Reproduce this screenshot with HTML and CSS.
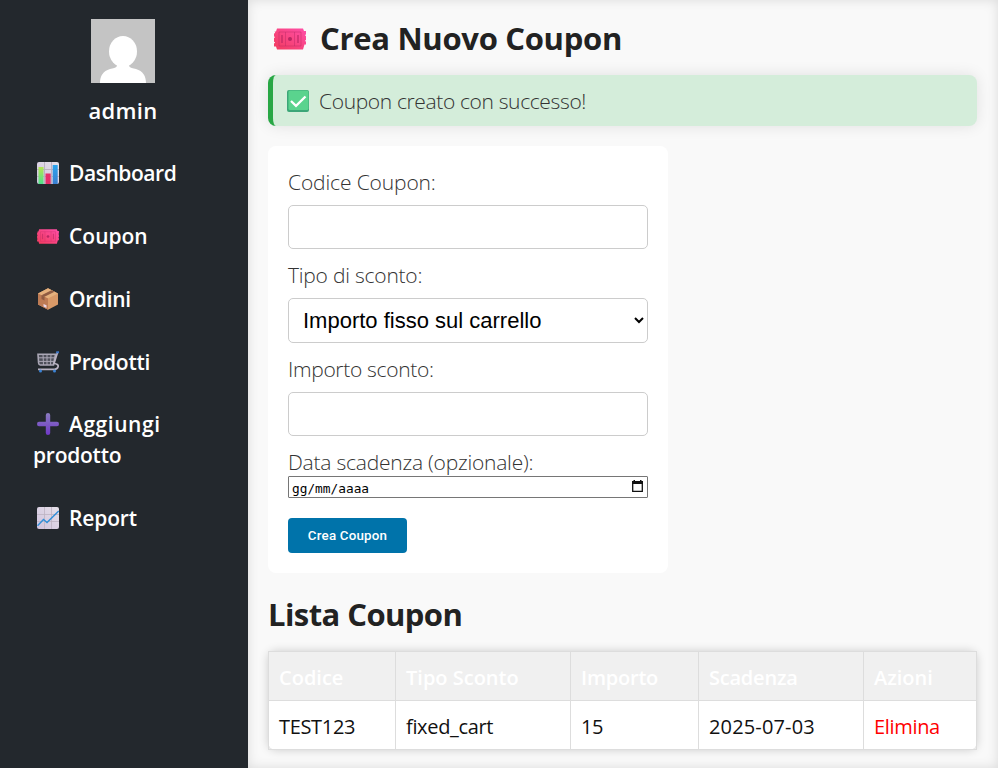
FILE: index.html
```html
<!DOCTYPE html>
<html lang="it">
<head>
<meta charset="utf-8">
<title>Crea Nuovo Coupon</title>
<link rel="stylesheet" href="styles.css">
</head>
<body>
<svg class="defs" width="0" height="0" aria-hidden="true">
  <defs>
    <linearGradient id="pink" x1="0" x2="1" y1="1" y2="0"><stop offset="0" stop-color="#f23b5e"/><stop offset="1" stop-color="#ff4fa8"/></linearGradient>
    <linearGradient id="green" x1="0" x2="0" y1="0" y2="1"><stop offset="0" stop-color="#b5e552"/><stop offset="1" stop-color="#4fe08c"/></linearGradient>
    <linearGradient id="blue" x1="0" x2="0" y1="0" y2="1"><stop offset="0" stop-color="#2ba4ee"/><stop offset="1" stop-color="#3b7fd0"/></linearGradient>
    <linearGradient id="paper" x1="1" x2="0" y1="0" y2="1"><stop offset="0" stop-color="#e6e0e8"/><stop offset="1" stop-color="#cfc3de"/></linearGradient>
    <linearGradient id="violet" x1="0" x2="0" y1="0" y2="1"><stop offset="0" stop-color="#8a7cc0"/><stop offset="1" stop-color="#7038c8"/></linearGradient>
    <symbol id="ticket" viewBox="0 0 32 22">
      <path fill="url(#pink)" d="M3 0.5H29L30 3H32V6.500Q30 7.200 32 8V12Q30 12.800 32 13.500V16.500H30.500L29 21.500H3L2 18.500H0V15.500Q2 14.500 0 13.800V10Q2 9.200 0 8.500V5.500Q2 5 0.500 3.500H2Z"/>
      <g fill="none" stroke="#b82763" stroke-opacity=".6"><path d="M5 4H27V18H5ZM11.500 4V18M20.500 4V18" stroke-width=".7"/><path d="M8 7V15M24 7V15" stroke-width="1.800"/></g>
      <circle cx="16" cy="11" r="2" fill="#b82763"/>
    </symbol>
  </defs>
</svg>
<div class="layout">
  <aside class="sidebar">
    <div class="profile">
      <svg class="avatar" viewBox="0 0 64 64"><rect width="64" height="64" fill="#c4c4c4"/><ellipse cx="32" cy="32.500" rx="14" ry="15.500" fill="#fff"/><path fill="#fff" d="M26 43V47C25 49 22 49 19 50C12 52 9 57 9 64H55C55 57 52 52 45 50C42 49 39 49 38 47V43Z"/></svg>
      <div class="username">admin</div>
    </div>
    <nav class="menu">
      <a class="item dashboard"><svg class="icon" viewBox="0 0 22 22"><rect width="22" height="22" rx="2" fill="url(#paper)"/><path d="M7.500 0V22M14.500 0V22M0 7.500H22M0 14.500H22" stroke="#b8adbd" stroke-width=".9"/><rect x="1.500" y="5" width="5" height="17" fill="url(#green)"/><rect x="8.500" y="11.500" width="5.200" height="10.500" fill="#e62e6b"/><rect x="15.700" y="3" width="5" height="19" fill="url(#blue)"/></svg><span>Dashboard</span></a>
      <a class="item coupon"><svg class="icon ticket"><use href="#ticket"/></svg><span>Coupon</span></a>
      <a class="item orders"><svg class="icon" viewBox="0 0 22 22"><path d="M11 .3 21 5.500V16.500L11 21.700 1 16.500V5.500Z" fill="#d99a68"/><path d="M11 .3 21 5.500 11 10.500 1 5.500Z" fill="#e5b17d"/><path d="M1 5.500 11 10.500V21.700L1 16.500Z" fill="#bd7b54"/><path d="M4.500 3.800 7.500 2.200 17.500 7.200 14.500 8.700Z" fill="#8f5c43" transform="matrix(-1 0 0 1 22 0)"/><path d="M4.500 7.200V11L7.500 12.500V8.700Z" fill="#8f5c43"/><path d="M6.500 16 9.500 17.300V20L6.500 18.500Z" fill="#ead6e5"/></svg><span>Ordini</span></a>
      <a class="item products"><svg class="icon" viewBox="0 0 22 22"><g fill="none" stroke="#aaa7b5" stroke-width="1.600"><path d="M1 3.300H18.500L16.500 14H3.300Q1.800 14 1.600 12Z" fill="#4d4f59"/><path d="M1.500 6.800H17.500M1.800 10.400H17M6 3.300 6.500 14M10 3.300V14M14 3.300 13.500 14" stroke-width="1"/><path d="M20.500 1.500 17 12.500Q21.500 13 21.200 15.500Q20.500 18.300 17.500 18.300H1" stroke="#b8b2c1" stroke-width="1.700"/></g><path d="M19.300 .3H22V2.300H18.800Z" fill="#3c75c5"/><circle cx="3.500" cy="20" r="1.500" fill="#3c83d5"/><circle cx="17.500" cy="20" r="1.500" fill="#3c83d5"/></svg><span>Prodotti</span></a>
      <a class="item add"><svg class="icon" viewBox="0 0 22 22"><path d="M8.800 2Q8.800 0 11 0T13.200 2V8.800H20Q22 8.800 22 11T20 13.200H13.200V20Q13.200 22 11 22T8.800 20V13.200H2Q0 13.200 0 11T2 8.800H8.800Z" fill="url(#violet)"/></svg><span>Aggiungi</span><br><span class="second">prodotto</span></a>
      <a class="item report"><svg class="icon" viewBox="0 0 22 22"><rect width="22" height="22" rx="2" fill="url(#paper)"/><path d="M7.500 0V22M14.500 0V22M0 7.500H22M0 14.500H22" stroke="#bdb2c2" stroke-width=".8"/><path d="M.5 18.800 6.500 12.500 10 15.500 21.700 4" fill="none" stroke="#328fd8" stroke-width="1.500"/></svg><span>Report</span></a>
    </nav>
  </aside>
  <main class="content">
    <h1 class="title"><svg class="title-icon"><use href="#ticket"/></svg><span>Crea Nuovo Coupon</span></h1>
    <div class="notice"><svg class="icon" viewBox="0 0 22 22"><rect width="22" height="22" rx="2" fill="#3ca678"/><rect x="1.500" y=".6" width="20" height="19.500" rx="1.500" fill="#5ad38e"/><path d="M4 11 9 15.800 18.500 6.500" fill="none" stroke="#fff" stroke-width="2.300"/></svg><span>Coupon creato con successo!</span></div>
    <form class="card">
      <label class="label l-code" for="code">Codice Coupon:</label>
      <input class="field" id="code" type="text">
      <label class="label l-type" for="type">Tipo di sconto:</label>
      <select class="field select" id="type"><option>Importo fisso sul carrello</option></select>
      <label class="label l-amount" for="amount">Importo sconto:</label>
      <input class="field" id="amount" type="text">
      <div class="label l-date">Data scadenza (opzionale):</div>
      <div class="date"><span>gg/mm/aaaa</span><svg width="11" height="12" viewBox="0 0 11 12"><path d="M.7 2H10.300V11.300H.7Z" fill="none" stroke="#111" stroke-width="1.300"/><path d="M0 1H11V4H0ZM1.500 0H3V2H1.500ZM8 0H9.500V2H8Z" fill="#111"/></svg></div>
      <button class="submit" type="button">Crea Coupon</button>
    </form>
    <h2 class="subtitle"><span>Lista Coupon</span></h2>
    <table class="coupons">
      <colgroup><col class="c1"><col class="c2"><col class="c3"><col class="c4"><col class="c5"></colgroup>
      <thead><tr><th>Codice</th><th>Tipo Sconto</th><th class="amount">Importo</th><th class="amount">Scadenza</th><th>Azioni</th></tr></thead>
      <tbody><tr><td>TEST123</td><td>fixed_cart</td><td>15</td><td class="expiry">2025-07-03</td><td class="delete">Elimina</td></tr></tbody>
    </table>
  </main>
</div>
</body>
</html>
```
FILE: styles.css
```css
* { box-sizing: border-box; }
body { margin: 0; background: #f9f9f9; font-family: "Open Sans", "Noto Sans", sans-serif; font-size: 21px; overflow: hidden; }
.defs { position: absolute; }
.layout { display: flex; height: 768px; }
.sidebar { width: 248px; flex: none; background: #23282d; color: #fff; font-weight: 600; }
.profile { display: flex; flex-direction: column; align-items: center; padding: 19px 2px 0 0; }
.avatar { width: 64px; height: 64px; }
.username { margin-top: 12px; line-height: 31px; font-size: 22px; letter-spacing: .3px; }
.menu { display: flex; flex-direction: column; gap: 32px; margin-top: 32px; padding-left: 34px; }
.item { display: block; line-height: 31px; white-space: nowrap; }
.dashboard { letter-spacing: -.45px; }
.orders { letter-spacing: -.3px; }
.products, .second { letter-spacing: -.25px; }
.add { margin-top: -1px; }
.add span:not(.second) { letter-spacing: .55px; }
.second { margin-left: -1px; }
.report { letter-spacing: -.15px; }
.icon { width: 22px; height: 22px; margin: 0 10px 0 3px; vertical-align: -3px; }
.icon.ticket { height: 15px; vertical-align: 0; }
.content { flex: 1; min-width: 0; height: 768px; padding: 20px 21px 0 20px; box-shadow: inset 0 0 12px rgba(0,0,0,.12); }
h1, h2 { margin: 0; font-size: 31px; font-weight: 700; color: #222; line-height: 40px; white-space: nowrap; }
.title { display: flex; align-items: center; height: 38px; letter-spacing: -.3px; }
.title span { margin-top: -2px; }
.title-icon { width: 32px; height: 22px; margin: 0 14px 0 6px; }
.notice { display: flex; align-items: center; height: 51px; margin-top: 17px; padding-left: 11px; border-left: 5px solid #28a745; border-radius: 8px; background: #d4edda; box-shadow: 0 0 15px rgba(0,0,0,.1); color: #333; font-weight: 300; letter-spacing: -.36px; white-space: nowrap; }
.card { width: 400px; height: 427px; margin-top: 20px; padding: 20px; border-radius: 8px; background: #fff; }
.label { display: block; width: max-content; height: 31px; line-height: 33px; color: #333; font-weight: 300; white-space: nowrap; }
.l-code { letter-spacing: -.13px; }
.l-type { letter-spacing: -.22px; }
.l-amount { letter-spacing: -.32px; }
.l-date { letter-spacing: -.22px; }
.field { display: block; width: 360px; height: 44px; margin: 8px 0 10px; padding: 10px; border: 1px solid #ccc; border-radius: 5px; background: #fff; font: 22px "Liberation Sans", sans-serif; color: #000; }
.select { height: 45px; padding: 0 10px; }
.date { display: flex; align-items: center; justify-content: space-between; height: 22px; margin-top: -1px; padding: 0 4px 0 3px; border: 1px solid #767676; border-radius: 1px; color: #000; font: 12.8px/20px "DejaVu Sans Mono", monospace; }
.date span { margin-top: 3px; }
.date svg { margin-bottom: 2px; }
.submit { width: 119px; height: 35px; margin-top: 20px; padding: 0; border: 0; border-radius: 4px; background: #0073aa; color: #fff; font: 500 13.333px Roboto, sans-serif; letter-spacing: .2px; }
.subtitle { margin-top: 21px; letter-spacing: -.57px; }
.coupons { width: 709px; margin-top: 17px; table-layout: fixed; border-collapse: collapse; background: #fff; border-radius: 8px; box-shadow: 0 0 10px rgba(0,0,0,.18); font-size: 20px; color: #111; }
.coupons th, .coupons td { height: 49px; padding: 4px 0 0 10px; border: 1px solid #ddd; text-align: left; white-space: nowrap; line-height: 28px; }
.coupons th { background: #f0f0f0; color: #fff; font-weight: 600; }
.coupons .amount { letter-spacing: -.22px; }
.coupons td { letter-spacing: -.33px; }
.coupons .expiry { letter-spacing: .15px; }
.coupons .delete { color: #f00; }
.c1 { width: 127px; } .c2 { width: 175px; } .c3 { width: 128px; } .c4 { width: 165px; } .c5 { width: 113px; }
```
